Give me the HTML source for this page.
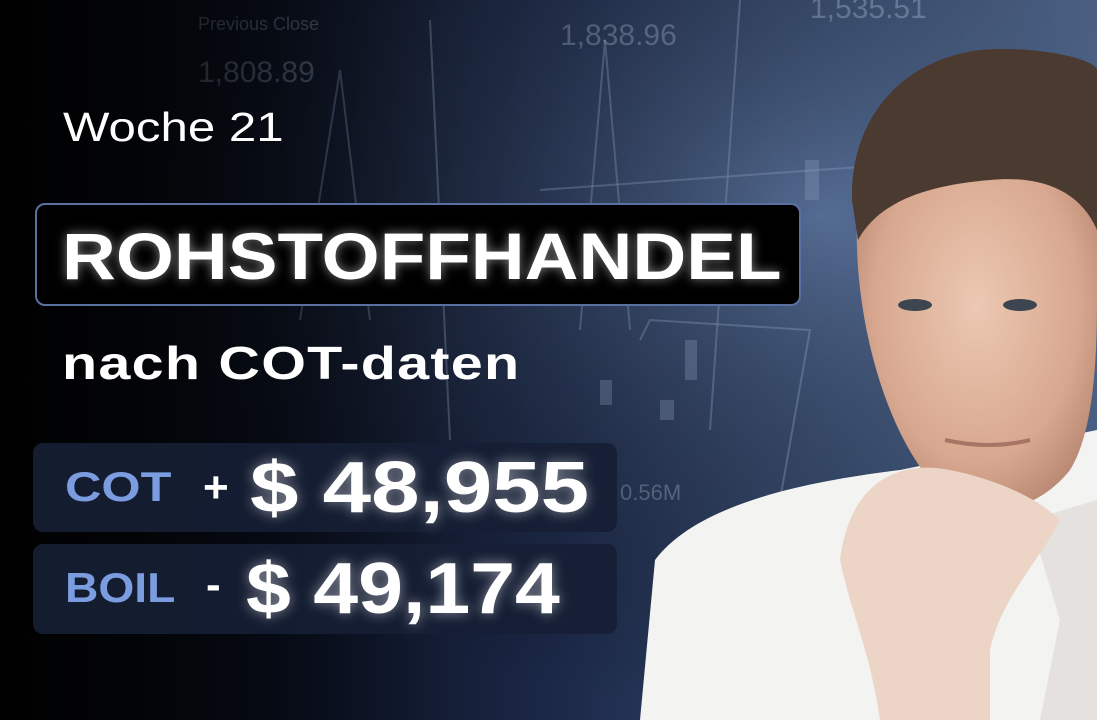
<!DOCTYPE html>
<html><head><meta charset="utf-8"><style>
html,body{margin:0;padding:0}
body{width:1097px;height:720px;overflow:hidden;position:relative;font-family:"Liberation Sans",sans-serif;
background:linear-gradient(90deg,#05070c 0%,#0c1426 25%,#22325a 50%,#3e5680 75%,#5a74a0 100%);}
.bg{position:absolute;inset:0}
.t{position:absolute;color:#fff;white-space:nowrap;transform-origin:0 0}
.box{position:absolute;border-radius:10px}
</style></head><body>
<svg class="bg" width="1097" height="720" viewBox="0 0 1097 720">
<defs>
<radialGradient id="g1" cx="0.75" cy="0.3" r="0.7"><stop offset="0" stop-color="#6680ac" stop-opacity=".8"/><stop offset="1" stop-color="#000" stop-opacity="0"/></radialGradient>
<linearGradient id="dk" x1="0" y1="0" x2="1" y2="0"><stop offset="0" stop-color="#000" stop-opacity=".9"/><stop offset=".4" stop-color="#000" stop-opacity=".25"/><stop offset="1" stop-color="#000" stop-opacity="0"/></linearGradient>
<radialGradient id="face" cx=".5" cy=".45" r=".6"><stop offset="0" stop-color="#ecc8b2"/><stop offset=".7" stop-color="#d8a890"/><stop offset="1" stop-color="#b98872"/></radialGradient>
</defs>
<rect width="1097" height="720" fill="url(#g1)"/>
<g stroke="#8ea4c8" stroke-opacity=".45" fill="none" stroke-width="2">
<path d="M300 320 L340 70 L370 320"/><path d="M580 330 L605 40 L630 330"/>
<path d="M430 20 L450 440"/><path d="M740 0 L710 430"/>
<path d="M540 190 L1097 150"/><path d="M640 340 L650 320 L810 330 L780 500"/>
</g>
<g fill="#8ea4c8" fill-opacity=".4">
<rect x="685" y="340" width="12" height="40"/><rect x="660" y="400" width="14" height="20"/><rect x="600" y="380" width="12" height="25"/><rect x="805" y="160" width="14" height="40"/>
</g>
<g fill="#a8b8d4" fill-opacity=".45" font-family="Liberation Sans" font-size="30">
<text x="198" y="82">1,808.89</text><text x="560" y="45">1,838.96</text><text x="810" y="18">1,535.51</text><text x="620" y="500" font-size="22">0.56M</text>
<text x="198" y="30" font-size="18">Previous Close</text>
</g>
<rect width="1097" height="720" fill="url(#dk)"/>
<path d="M640 720 L655 560 C700 500 820 480 900 470 L1097 430 L1097 720 Z" fill="#f3f3f2"/>
<path d="M1030 520 L1060 620 L1040 720 L1097 720 L1097 500 Z" fill="#e4e1de"/>
<path d="M858 200 C850 300 880 420 930 480 C970 520 1030 520 1070 470 C1095 430 1097 350 1097 300 L1097 140 Z" fill="url(#face)"/>
<path d="M852 200 C850 120 900 60 980 50 C1040 45 1097 60 1097 70 L1097 230 C1080 190 1040 175 990 180 C930 185 880 200 858 240 Z" fill="#4b3a30"/>
<path d="M840 560 C850 480 900 460 950 470 C1000 480 1040 500 1060 520 C1040 560 1000 600 990 650 L990 720 L880 720 C870 650 850 610 840 560 Z" fill="#ecd5c6"/>
<g fill="#3d4650"><ellipse cx="915" cy="305" rx="17" ry="6"/><ellipse cx="1020" cy="305" rx="17" ry="6"/></g>
<path d="M945 440 Q990 450 1030 440" stroke="#a87564" stroke-width="4" fill="none"/>
</svg>
<div class="t" style="left:63px;top:104px;font-size:41px;transform:scaleX(1.2)">Woche 21</div>
<div class="box" style="left:35px;top:203px;width:766px;height:103px;background:#000;border:2px solid #5a70a0;box-sizing:border-box"></div>
<div class="t" style="left:62px;top:218px;font-size:66px;font-weight:bold;transform:scaleX(1.13);text-shadow:0 0 10px rgba(255,255,255,.5)">ROHSTOFFHANDEL</div>
<div class="t" style="left:62px;top:336px;font-size:46px;font-weight:bold;letter-spacing:1px;transform:scaleX(1.25)">nach COT-daten</div>
<div class="box" style="left:33px;top:443px;width:584px;height:89px;background:rgba(22,30,52,.92)"></div>
<div class="box" style="left:33px;top:544px;width:584px;height:90px;background:rgba(22,30,52,.92)"></div>
<div class="t" style="left:65px;top:463px;font-size:42px;font-weight:bold;color:#7b9de0;transform:scaleX(1.2)">COT</div>
<div class="t" style="left:203px;top:463px;font-size:44px;font-weight:bold">+</div>
<div class="t" style="left:250px;top:447px;font-size:72px;font-weight:bold;transform:scaleX(1.21);text-shadow:0 0 12px rgba(255,255,255,.5)">$ 48,955</div>
<div class="t" style="left:65px;top:564px;font-size:42px;font-weight:bold;color:#7b9de0;transform:scaleX(1.1)">BOIL</div>
<div class="t" style="left:206px;top:560px;font-size:44px;font-weight:bold">-</div>
<div class="t" style="left:246px;top:548px;font-size:72px;font-weight:bold;transform:scaleX(1.12);text-shadow:0 0 12px rgba(255,255,255,.5)">$ 49,174</div>
</body></html>
